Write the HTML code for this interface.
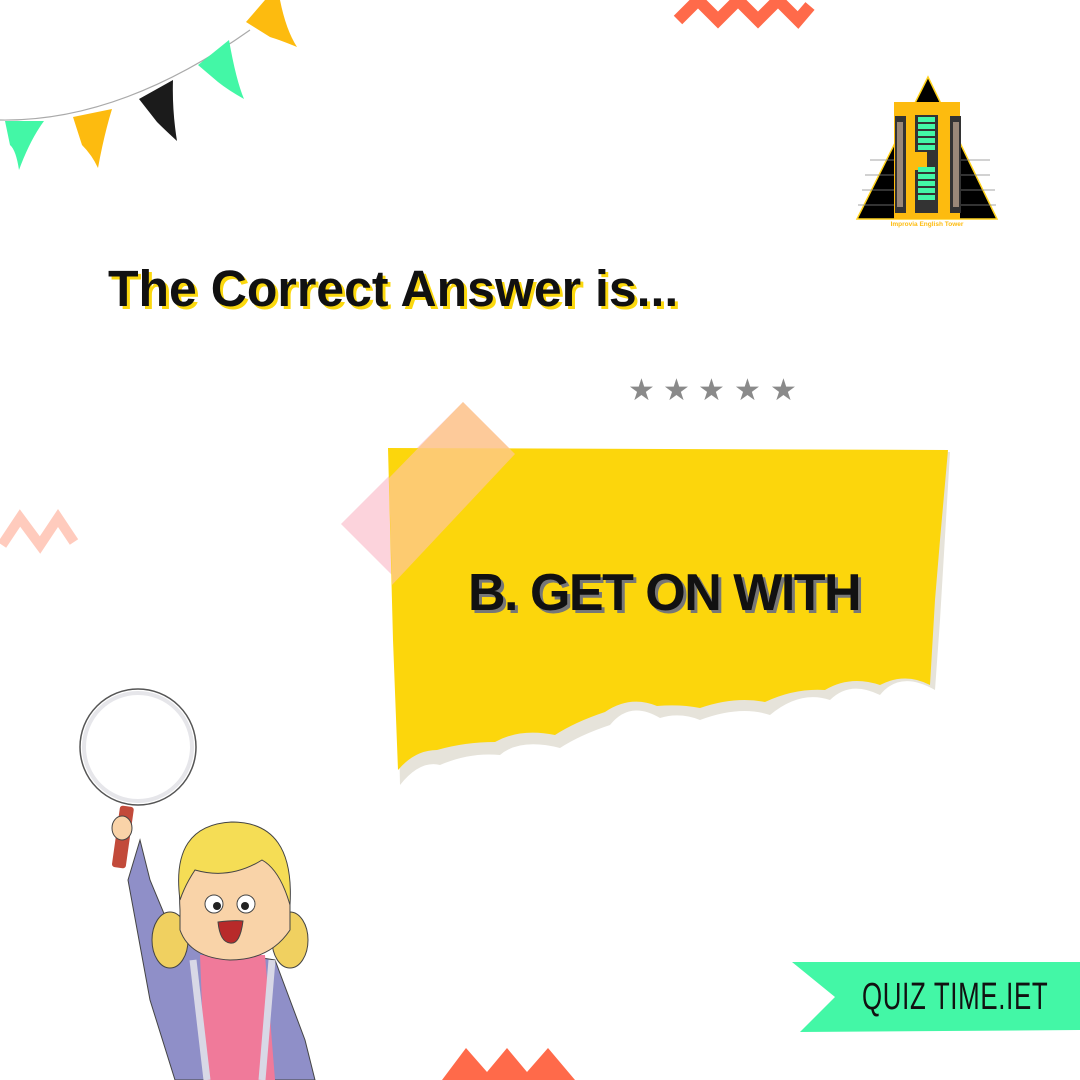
<!DOCTYPE html>
<html><head><meta charset="utf-8"><style>
body{margin:0;width:1080px;height:1080px;background:#fff;position:relative;overflow:hidden;font-family:"Liberation Sans",sans-serif}
.a{position:absolute;white-space:nowrap}
</style></head><body>
<svg class="a" style="left:0;top:0" width="1080" height="1080" viewBox="0 0 1080 1080">
<path d="M0 120 Q120 122 250 30" stroke="#aaa" stroke-width="1.2" fill="none"/>
<path d="M5 121 L44 121 Q30 140 19 170 Q16 150 10 145 Z" fill="#43f7a6"/>
<path d="M73 117 L112 109 Q104 135 98 168 Q92 155 82 145 Z" fill="#fdbb0f"/>
<path d="M139 99 L173 80 Q172 110 177 141 Q165 130 157 122 Z" fill="#1b1b1b"/>
<path d="M198 65 L229 40 Q236 80 244 99 Q228 90 218 82 Z" fill="#43f7a6"/>
<path d="M246 22 L265 0 L280 0 Q286 30 297 47 Q280 40 270 37 Z" fill="#fdbb0f"/>
<polyline points="678,20 698,0 718,20 738,0 758,20 778,0 798,20 810,6" stroke="#ff6a4a" stroke-width="12" fill="none" stroke-linejoin="miter"/>
<path d="M442 1080 L466 1048 L487 1072 L507 1048 L527 1072 L548 1048 L575 1080 Z" fill="#ff6a4a"/>
<polyline points="2,545 20,518 40,545 58,518 74,542" stroke="#ffcbbd" stroke-width="10" fill="none"/>
<path d="M463 402 L585 524 L463 646 L341 524 Z" fill="#fcd3dc"/>
<g fill="#8a8a8a" font-size="30" font-family="DejaVu Sans">
<text x="628" y="400">★</text><text x="663" y="400">★</text><text x="698" y="400">★</text><text x="734" y="400">★</text><text x="770" y="400">★</text></g>
<path d="M393 455 L950 452 L946 520 L940 620 L935 690 Q900 670 880 695 Q850 680 830 700 Q800 690 770 715 Q740 705 700 720 Q680 712 660 718 Q630 700 610 725 Q580 735 560 748 Q520 738 500 755 Q470 752 440 765 Q420 760 400 785 Z" fill="#e6e3da"/>
<path d="M388 448 L948 450 L940 540 L935 600 L930 685 Q905 672 880 685 Q850 675 825 690 Q795 688 765 702 Q735 696 700 708 Q680 704 657 706 Q630 695 605 712 Q575 722 555 735 Q520 728 495 742 Q465 742 437 750 Q415 750 398 770 L393 640 Z" fill="#fcd60c"/>
<path d="M463 402 L515 454 L392 585 L389 478 Z" fill="#fdc88a" opacity="0.8"/>
<path d="M792 962 L1080 962 L1080 1030 L800 1032 L835 997 Z" fill="#43f7a6"/>
<path d="M928 77 L997 219 L857 219 Z" fill="#000" stroke="#ffd21c" stroke-width="1.5"/>
<g stroke="#888" stroke-width="0.8"><line x1="870" y1="160" x2="990" y2="160"/><line x1="865" y1="175" x2="990" y2="175"/><line x1="862" y1="190" x2="995" y2="190"/><line x1="858" y1="205" x2="996" y2="205"/></g>
<rect x="894" y="102" width="66" height="117" fill="#fdbb0f"/>
<rect x="895" y="116" width="11" height="97" fill="#333"/><rect x="897" y="122" width="6" height="85" fill="#9a8878"/>
<rect x="950" y="116" width="11" height="97" fill="#333"/><rect x="953" y="122" width="6" height="85" fill="#9a8878"/>
<rect x="915" y="115" width="23" height="98" fill="#333"/><rect x="915" y="152" width="12" height="18" fill="#fdbb0f"/>
<g fill="#43f7a6"><rect x="918" y="117" width="17" height="5"/><rect x="918" y="124" width="17" height="5"/><rect x="918" y="131" width="17" height="5"/><rect x="918" y="138" width="17" height="5"/><rect x="918" y="145" width="17" height="5"/><rect x="918" y="167" width="17" height="5"/><rect x="918" y="174" width="17" height="5"/><rect x="918" y="181" width="17" height="5"/><rect x="918" y="188" width="17" height="5"/><rect x="918" y="195" width="17" height="5"/></g>
<text x="927" y="226" font-size="6.5" fill="#fdbb0f" text-anchor="middle" font-weight="bold">Improvia English Tower</text>
<circle cx="138" cy="747" r="58" fill="#fff" stroke="#555" stroke-width="1.5"/>
<circle cx="138" cy="747" r="54" fill="none" stroke="#e6e6ea" stroke-width="4"/>
<rect x="116" y="806" width="14" height="62" rx="3" fill="#c24a3a" transform="rotate(8 123 836)"/>
<path d="M140 840 L128 880 L150 1000 L175 1080 L315 1080 L305 1040 L275 960 L210 950 L175 940 L150 880 Z" fill="#8f8fc8" stroke="#444" stroke-width="1"/>
<path d="M200 955 L265 955 L275 1080 L205 1080 Z" fill="#f07a9a"/>
<path d="M193 960 L207 1080 M272 960 L262 1080" stroke="#d8d8e6" stroke-width="7"/>
<ellipse cx="170" cy="940" rx="18" ry="28" fill="#f0d060" stroke="#444"/>
<ellipse cx="290" cy="940" rx="18" ry="28" fill="#f0d060" stroke="#444"/>
<path d="M180 910 Q175 830 232 822 Q290 825 290 900 L290 930 Q270 960 230 960 Q190 958 180 930 Z" fill="#f9d3a8" stroke="#444"/>
<path d="M180 900 Q170 825 232 822 Q295 822 290 905 Q280 870 262 860 Q230 880 195 870 Q185 885 180 900 Z" fill="#f5dd55" stroke="#444"/>
<circle cx="214" cy="904" r="9" fill="#fff" stroke="#444"/><circle cx="246" cy="904" r="9" fill="#fff" stroke="#444"/>
<circle cx="217" cy="906" r="4" fill="#222"/><circle cx="245" cy="906" r="4" fill="#222"/>
<path d="M218 922 Q234 920 243 921 Q240 945 230 943 Q220 942 218 922 Z" fill="#b82a2a" stroke="#444"/>
<ellipse cx="122" cy="828" rx="10" ry="12" fill="#f9d3a8" stroke="#444"/>
</svg>
<div class="a" style="left:108px;top:259px;font-size:51px;font-weight:bold;color:#111;text-shadow:3px 3px 0 #fbd80e;transform:scaleX(0.98);transform-origin:left">The Correct Answer is...</div>
<div class="a" style="left:468px;top:563px;font-size:52px;font-weight:900;color:#111;letter-spacing:-1.5px;text-shadow:3px 3px 0 #777">B. GET ON WITH</div>
<div class="a" style="left:862px;top:976px;font-size:38px;color:#111;transform:scaleX(0.68);transform-origin:left;letter-spacing:1px">QUIZ TIME.IET</div>
</body></html>
